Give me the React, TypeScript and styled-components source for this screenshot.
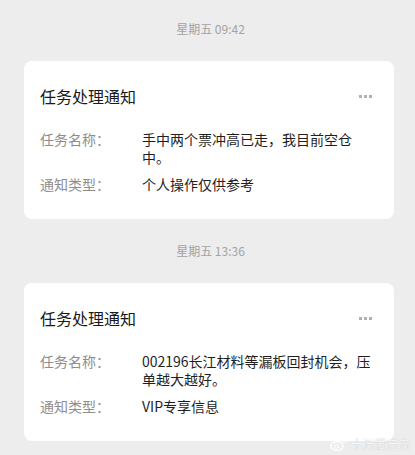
import React from "react";
import styled, { createGlobalStyle } from "styled-components";

const Global = createGlobalStyle`
  html, body { margin: 0; padding: 0; background: #ededed; }
  body { font-family: "Noto Sans CJK SC", "Noto Sans", sans-serif; }
`;

const Page = styled.div`
  position: relative;
  width: 415px;
  height: 455px;
  overflow: hidden;
  background: #ededed;
  padding: 0 21px 0 24px;
  box-sizing: border-box;
  display: flex;
  flex-direction: column;
`;

const Stamp = styled.div<{ $top: number }>`
  height: 17px;
  line-height: 17px;
  margin: ${(p) => p.$top}px 0 24px;
  text-align: center;
  font-size: 12px;
  color: #a3a3a3;
  padding-left: 3px;
`;

const Card = styled.div`
  background: #ffffff;
  border-radius: 8px;
  padding: 24px 16px 26px 16px;
  display: flex;
  flex-direction: column;
`;

const Head = styled.div`
  display: flex;
  align-items: center;
  justify-content: space-between;
  height: 22px;
  margin-bottom: 23px;
`;

const Title = styled.div`
  font-size: 16px;
  color: #1a1a1a;
  line-height: 22px;
`;

const Dots = styled.div`
  display: flex;
  gap: 2px;
  margin-right: 6px;
  span {
    width: 3px;
    height: 3px;
    background: #b0b0b0;
  }
`;

const Rows = styled.div`
  display: flex;
  flex-direction: column;
  gap: 9px;
`;

const Row = styled.div`
  display: grid;
  grid-template-columns: 102px 237px;
  font-size: 14px;
  line-height: 18px;
`;

const Label = styled.div`
  color: #8e8e8e;
`;

const Value = styled.div`
  color: #1f1f1f;
`;

const Mark = styled.div`
  position: absolute;
  right: 4px;
  bottom: 3px;
  display: flex;
  align-items: center;
  gap: 4px;
  color: rgba(255, 255, 255, 0.95);
  font-size: 12px;
  text-shadow: 0 0 1px rgba(0, 0, 0, 0.3);
`;

type Item = { time: string; task: string; kind: string; top: number };

const items: Item[] = [
  { time: "星期五 09:42", task: "手中两个票冲高已走，我目前空仓中。", kind: "个人操作仅供参考", top: 20 },
  { time: "星期五 13:36", task: "002196长江材料等漏板回封机会，压单越大越好。", kind: "VIP专享信息", top: 23 },
];

export default function App() {
  return (
    <Page>
      <Global />
      {items.map((it, i) => (
        <React.Fragment key={i}>
          <Stamp $top={it.top}>{it.time}</Stamp>
          <Card>
            <Head>
              <Title>任务处理通知</Title>
              <Dots>
                <span />
                <span />
                <span />
              </Dots>
            </Head>
            <Rows>
              <Row>
                <Label>任务名称：</Label>
                <Value>{it.task}</Value>
              </Row>
              <Row>
                <Label>通知类型：</Label>
                <Value>{it.kind}</Value>
              </Row>
            </Rows>
          </Card>
        </React.Fragment>
      ))}
      <Mark>
        <svg width="17" height="14" viewBox="0 0 17 14">
          <ellipse cx="7" cy="9" rx="6.3" ry="4.3" fill="none" stroke="rgba(255,255,255,0.95)" strokeWidth="1.3" />
          <ellipse cx="6.5" cy="9.5" rx="2.3" ry="1.7" fill="none" stroke="rgba(255,255,255,0.95)" strokeWidth="1" />
          <path d="M11.5 1.5a4 4 0 0 1 4 4" fill="none" stroke="rgba(255,255,255,0.95)" strokeWidth="1.2" />
          <path d="M11.5 3.6a2 2 0 0 1 2 2" fill="none" stroke="rgba(255,255,255,0.95)" strokeWidth="1" />
        </svg>
        <span>十万爱吉方</span>
      </Mark>
    </Page>
  );
}
